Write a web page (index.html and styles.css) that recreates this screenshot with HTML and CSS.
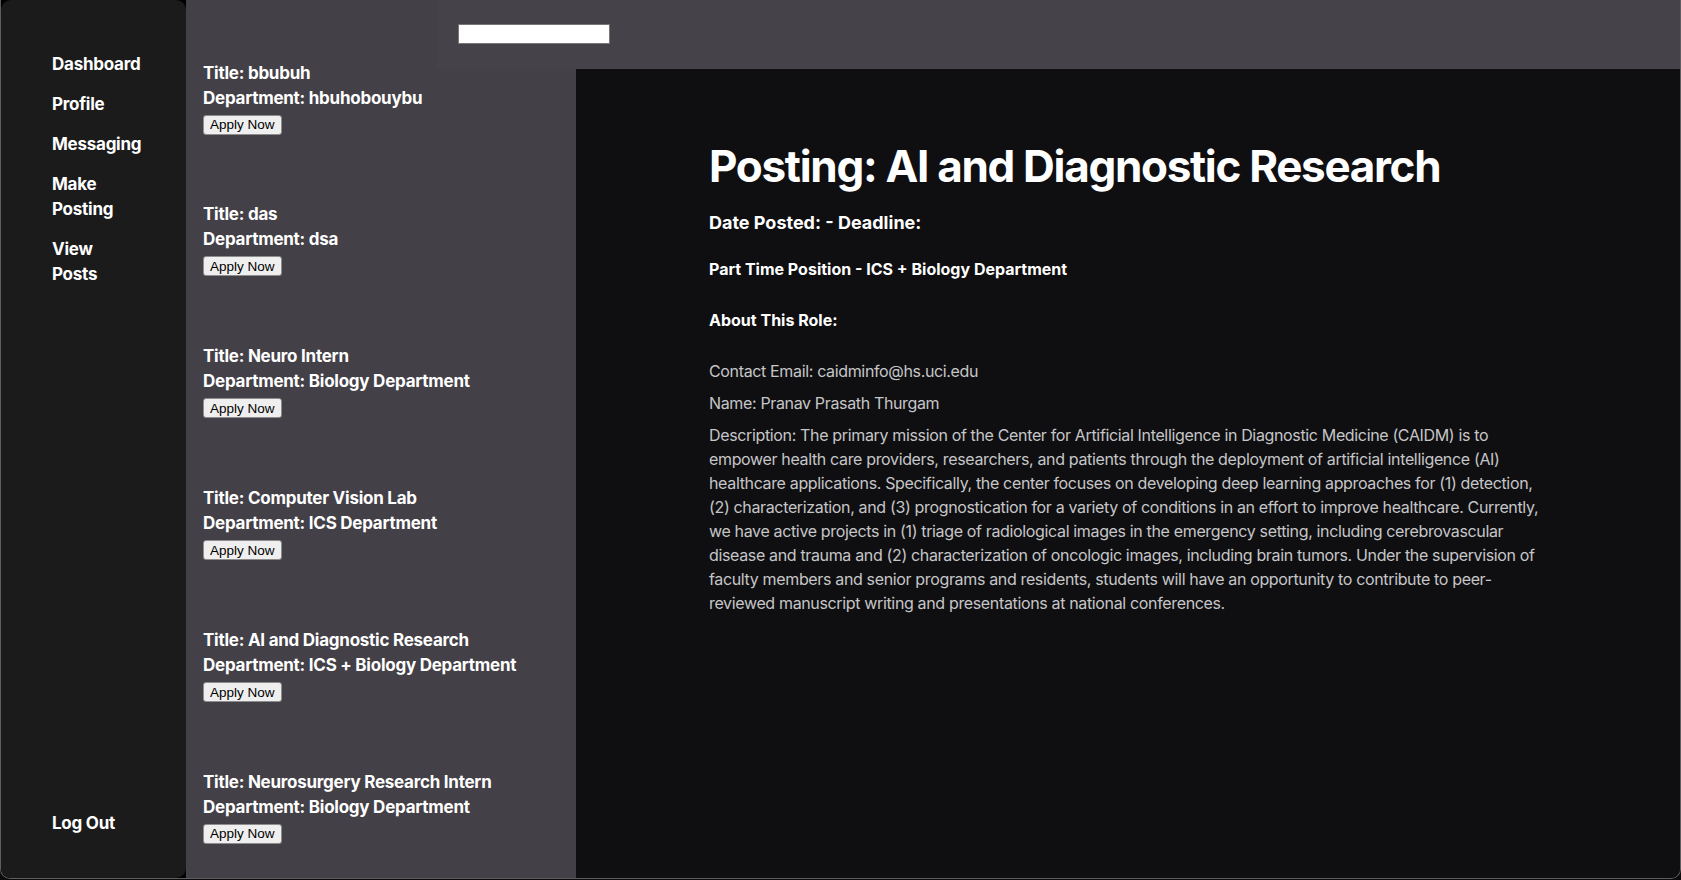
FILE: index.html
```html
<!DOCTYPE html>
<html lang="en">
<head>
<meta charset="utf-8">
<title>Postings</title>
<link rel="stylesheet" href="styles.css">
</head>
<body>
<div class="app">
  <aside class="sidebar">
    <ul class="nav">
      <li>Dashboard</li>
      <li>Profile</li>
      <li>Messaging</li>
      <li>Make Posting</li>
      <li>View Posts</li>
    </ul>
    <div class="logout">Log Out</div>
  </aside>
  <div class="workspace">
    <ul class="posts">
      <li class="post">
        <div class="post-line">Title: bbubuh</div>
        <div class="post-line">Department: hbuhobouybu</div>
        <button class="apply">Apply Now</button>
      </li>
      <li class="post">
        <div class="post-line">Title: das</div>
        <div class="post-line">Department: dsa</div>
        <button class="apply">Apply Now</button>
      </li>
      <li class="post">
        <div class="post-line">Title: Neuro Intern</div>
        <div class="post-line">Department: Biology Department</div>
        <button class="apply">Apply Now</button>
      </li>
      <li class="post">
        <div class="post-line">Title: Computer Vision Lab</div>
        <div class="post-line">Department: ICS Department</div>
        <button class="apply">Apply Now</button>
      </li>
      <li class="post">
        <div class="post-line">Title: AI and Diagnostic Research</div>
        <div class="post-line">Department: ICS + Biology Department</div>
        <button class="apply">Apply Now</button>
      </li>
      <li class="post">
        <div class="post-line">Title: Neurosurgery Research Intern</div>
        <div class="post-line">Department: Biology Department</div>
        <button class="apply">Apply Now</button>
      </li>
    </ul>
    <header class="topbar">
      <input class="search" type="text">
    </header>
    <main class="detail">
      <div class="detail-inner">
        <h1 class="detail-title">Posting: AI and Diagnostic Research</h1>
        <h3 class="detail-dates">Date Posted: - Deadline:</h3>
        <h4 class="detail-type">Part Time Position - ICS + Biology Department</h4>
        <h4 class="detail-about">About This Role:</h4>
        <p class="detail-text">Contact Email: caidminfo@hs.uci.edu</p>
        <p class="detail-text">Name: Pranav Prasath Thurgam</p>
        <p class="detail-text">Description: The primary mission of the Center for Artificial Intelligence in Diagnostic Medicine (CAIDM) is to empower health care providers, researchers, and patients through the deployment of artificial intelligence (AI) healthcare applications. Specifically, the center focuses on developing deep learning approaches for (1) detection, (2) characterization, and (3) prognostication for a variety of conditions in an effort to improve healthcare. Currently, we have active projects in (1) triage of radiological images in the emergency setting, including cerebrovascular disease and trauma and (2) characterization of oncologic images, including brain tumors. Under the supervision of faculty members and senior programs and residents, students will have an opportunity to contribute to peer-reviewed manuscript writing and presentations at national conferences.</p>
      </div>
    </main>
  </div>
</div>
</body>
</html>
```
FILE: styles.css
```css
* { box-sizing: border-box; }

html, body {
  margin: 0;
  padding: 0;
  background: #0b0b0c;
}

body {
  font-family: Inter, "Noto Sans", "Liberation Sans", sans-serif;
  color: #ffffff;
  width: 1681px;
  height: 880px;
  overflow: hidden;
}

.app {
  display: flex;
  width: 1681px;
  height: 879px;
  border: 1px solid #5e5e60;
  border-top: none;
  border-radius: 0 0 10px 10px;
  overflow: hidden;
  background: #000000;
}

/* Sidebar */
.sidebar {
  flex: 0 0 185px;
  background: #1b1b1c;
  border-radius: 10px;
  display: flex;
  flex-direction: column;
  padding: 52px 0 42px 51px;
}

.nav {
  list-style: none;
  margin: 0;
  padding: 0;
}

.nav li {
  width: min-content;
}

.nav li,
.logout {
  font-size: 17px;
  font-weight: 700;
  line-height: 25px;
  letter-spacing: -0.25px;
  margin-bottom: 15px;
}

.logout {
  margin-top: auto;
  margin-bottom: 0;
}

/* Workspace */
.workspace {
  flex: 1;
  display: grid;
  grid-template-columns: 390px 1fr;
  grid-template-rows: 69px 1fr;
  background: #434047;
  min-width: 0;
}

.posts {
  grid-column: 1;
  grid-row: 1 / 3;
  list-style: none;
  margin: 0;
  padding: 60.5px 0 0 17px;
  display: flex;
  flex-direction: column;
  gap: 67.9px;
}

.post-line {
  font-size: 17px;
  font-weight: 700;
  line-height: 25px;
  letter-spacing: -0.25px;
}

.apply {
  display: block;
  margin-top: 4px;
  height: 20px;
  padding: 0 6px;
  font-family: "Liberation Sans", Arial, sans-serif;
  font-size: 13.5px;
  color: #000000;
  background: #efefef;
  border: 1px solid #8d8d8d;
  border-radius: 3px;
}

.topbar {
  grid-column: 1 / 3;
  grid-row: 1;
  margin-left: 251px;
  padding: 24px 0 0 21px;
  background: #454249;
}

.search {
  display: block;
  width: 152px;
  height: 20px;
  margin: 0;
  padding: 0 4px;
  background: #ffffff;
  border: 1px solid #767676;
  border-radius: 0;
}

.detail {
  grid-column: 2;
  grid-row: 2;
  background: #0f0f11;
  padding-top: 70.6px;
}

.detail-inner {
  width: 838px;
  margin: 0 auto;
}

.detail-title {
  margin: 0;
  font-size: 44px;
  font-weight: 700;
  line-height: 1.2;
  letter-spacing: -1.3px;
}

.detail-dates {
  margin: 16.6px 0 0;
  font-size: 18px;
  font-weight: 700;
  line-height: 27px;
}

.detail-type {
  margin: 21.2px 0 0;
  font-size: 16px;
  font-weight: 700;
  line-height: 24px;
}

.detail-about {
  margin: 26.7px 0 0;
  font-size: 16px;
  font-weight: 700;
  line-height: 24px;
}

.detail-text {
  margin: 8px 0 0;
  font-size: 16px;
  line-height: 24px;
  letter-spacing: -0.35px;
  color: #c6c6c8;
}

.detail-about + .detail-text {
  margin-top: 27.6px;
}
```
